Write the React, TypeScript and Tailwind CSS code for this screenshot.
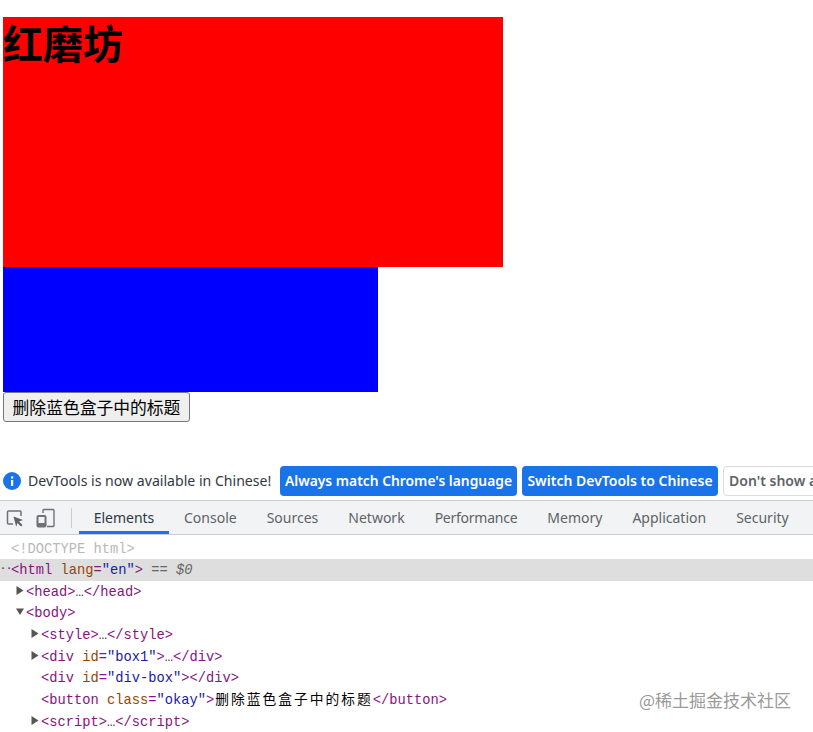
import React from "react";

const sans = "font-['Noto_Sans','Noto_Sans_CJK_SC',sans-serif]";
const tag = "text-[#881280]";
const attr = "text-[#994500]";
const val = "text-[#1a1aa6]";

function Arrow({ open }: { open?: boolean }) {
  return (
    <svg width="8" height="9" viewBox="0 0 8 9" className="absolute left-[-10px] top-[5px]">
      {open ? <path d="M0 1.5h8L4 8z" fill="#555" /> : <path d="M0.5 0l7 4.5-7 4.5z" fill="#555" />}
    </svg>
  );
}

function Row({ indent, arrow, children, className = "" }: { indent: string; arrow?: "open" | "closed"; children: React.ReactNode; className?: string }) {
  return (
    <div className={`h-[21.65px] leading-[24px] whitespace-nowrap ${indent} ${className}`}>
      <span className="relative inline-block">
        {arrow && <Arrow open={arrow === "open"} />}
        {children}
      </span>
    </div>
  );
}

export default function App() {
  const tabs = ["Console", "Sources", "Network"];
  const tabs2 = ["Memory", "Application", "Security"];
  return (
    <div className="relative w-[813px] h-[732px] overflow-hidden bg-white pt-[17px]">
      <div className="pl-[3px]">
        <div className="w-[500px] h-[250px] bg-[#ff0000] font-['Liberation_Sans','Noto_Sans_CJK_SC',sans-serif]">
          <h1 className="text-[40px] leading-[56px] font-bold text-black m-0">红磨坊</h1>
        </div>
        <div className="w-[375px] h-[125px] bg-[#0000ff]" />
        <button className="block w-[187px] h-[30px] p-0 whitespace-nowrap bg-[#efefef] border border-[#767676] rounded-[3px] text-[16.800px] leading-[26px] text-black text-center font-['Noto_Sans_CJK_SC',sans-serif]">
          删除蓝色盒子中的标题
        </button>
      </div>

      <div className={`mt-[41px] h-[38px] border-b border-[#cbcdd1] pl-[3px] pt-[3px] overflow-hidden whitespace-nowrap ${sans}`}>
        <div className="h-[30px] flex items-center">
          <svg width="18" height="18" viewBox="0 0 18 18" className="shrink-0">
            <circle cx="9" cy="9" r="9" fill="#1a73e8" />
            <rect x="8" y="8" width="2.200" height="6" fill="#fff" />
            <rect x="8" y="4.400" width="2.200" height="2.200" fill="#fff" />
          </svg>
          <span className="ml-[7px] w-[244px] shrink-0 text-[14.100px] text-[#303942]">DevTools is now available in Chinese!</span>
          <span className="ml-[8px] h-[30px] w-[237px] shrink-0 rounded-[4px] bg-[#1a73e8] text-white text-[13.850px] font-semibold leading-[30px] text-center">Always match Chrome's language</span>
          <span className="ml-[5px] h-[30px] w-[196px] shrink-0 rounded-[4px] bg-[#1a73e8] text-white text-[14px] font-semibold leading-[30px] text-center">Switch DevTools to Chinese</span>
          <span className="ml-[5px] h-[30px] shrink-0 rounded-[4px] border border-[#dadce0] bg-white pl-[5px] pr-[5px] text-[#5f6368] text-[14px] font-semibold leading-[28px]">Don't show again</span>
        </div>
      </div>

      <div className={`h-[34px] bg-[#f1f3f4] border-b border-[#cbcdd1] flex items-stretch whitespace-nowrap overflow-hidden ${sans}`}>
        <div className="w-[28px] shrink-0 flex items-center justify-center pl-[1px]">
          <svg width="18" height="18" viewBox="0 0 18 18" fill="none">
            <path d="M7 15H2.500A1 1 0 0 1 1.500 14V3A1 1 0 0 1 2.500 2H14A1 1 0 0 1 15 3V7" stroke="#6e7276" strokeWidth="1.500" />
            <path d="M7.500 7.500l9.500 3.500-4 1.400 3.500 3.500-1.500 1.500-3.500-3.500-1.300 3.800z" fill="#5f6368" />
          </svg>
        </div>
        <div className="w-[35px] shrink-0 flex items-center justify-center">
          <svg width="20" height="20" viewBox="0 0 20 20" fill="none">
            <path d="M7 5V2.500A1 1 0 0 1 8 1.500H17A1 1 0 0 1 18 2.500V17.500A1 1 0 0 1 17 18.500H11" stroke="#6e7276" strokeWidth="1.400" />
            <rect x="1.500" y="8" width="8" height="10.500" rx="1" stroke="#6e7276" strokeWidth="2" />
            <rect x="2" y="15" width="7" height="3" fill="#6e7276" />
          </svg>
        </div>
        <div className="w-px h-[20px] self-center bg-[#ccc] ml-[8px] mr-[7px]" />
        <div className="relative w-[90px] shrink-0 text-center text-[14px] leading-[33px] text-[#303942]">
          Elements
          <div className="absolute left-0 right-0 bottom-0 h-[3px] bg-[#1a73e8]" />
        </div>
        <div className="flex ml-[15px] gap-[30px] text-[14px] leading-[33px] text-[#5f6368]">
          {tabs.map((t) => (
            <span key={t}>{t}</span>
          ))}
          <span className="tracking-[-0.250px]">Performance</span>
          {tabs2.map((t) => (
            <span key={t}>{t}</span>
          ))}
        </div>
      </div>

      <div className="pt-[2.500px] font-['Liberation_Mono','Noto_Sans_CJK_SC',monospace] text-[13.750px]">
        <Row indent="pl-[11px]" className="text-[#b8b8b8]">&lt;!DOCTYPE html&gt;</Row>
        <div className="relative">
          <Row indent="pl-[11px]" className="bg-[#dedede]">
            <span className={tag}>&lt;html </span>
            <span className={attr}>lang</span>
            <span className={tag}>=</span>
            <span className={val}>"en"</span>
            <span className={tag}>&gt;</span>
            <span className="text-[#666]"> == </span>
            <span className="text-[#666] italic">$0</span>
          </Row>
          <span className="absolute left-0 top-[3px] text-[#444] text-[10px] leading-[14px] font-bold">··</span>
        </div>
        <Row indent="pl-[26px]" arrow="closed"><span className={tag}>&lt;head&gt;</span><span className="text-[#444]">…</span><span className={tag}>&lt;/head&gt;</span></Row>
        <Row indent="pl-[26px]" arrow="open"><span className={tag}>&lt;body&gt;</span></Row>
        <Row indent="pl-[41px]" arrow="closed"><span className={tag}>&lt;style&gt;</span><span className="text-[#444]">…</span><span className={tag}>&lt;/style&gt;</span></Row>
        <Row indent="pl-[41px]" arrow="closed">
          <span className={tag}>&lt;div </span><span className={attr}>id</span><span className={tag}>=</span><span className={val}>"box1"</span><span className={tag}>&gt;</span><span className="text-[#444]">…</span><span className={tag}>&lt;/div&gt;</span>
        </Row>
        <Row indent="pl-[41px]">
          <span className={tag}>&lt;div </span><span className={attr}>id</span><span className={tag}>=</span><span className={val}>"div-box"</span><span className={tag}>&gt;&lt;/div&gt;</span>
        </Row>
        <Row indent="pl-[41px]">
          <span className={tag}>&lt;button </span><span className={attr}>class</span><span className={tag}>=</span><span className={val}>"okay"</span><span className={tag}>&gt;</span><span className="text-black ml-px tracking-[2px]">删除蓝色盒子中的标题</span><span className={tag}>&lt;/button&gt;</span>
        </Row>
        <Row indent="pl-[41px]" arrow="closed"><span className={tag}>&lt;script&gt;</span><span className="text-[#444]">…</span><span className={tag}>&lt;/script&gt;</span></Row>
      </div>

      <div className="absolute left-[639px] top-[688px] text-[17px] leading-[24px] text-[#9a9a9a] font-['Noto_Sans_CJK_SC',sans-serif] whitespace-nowrap">@稀土掘金技术社区</div>
    </div>
  );
}
